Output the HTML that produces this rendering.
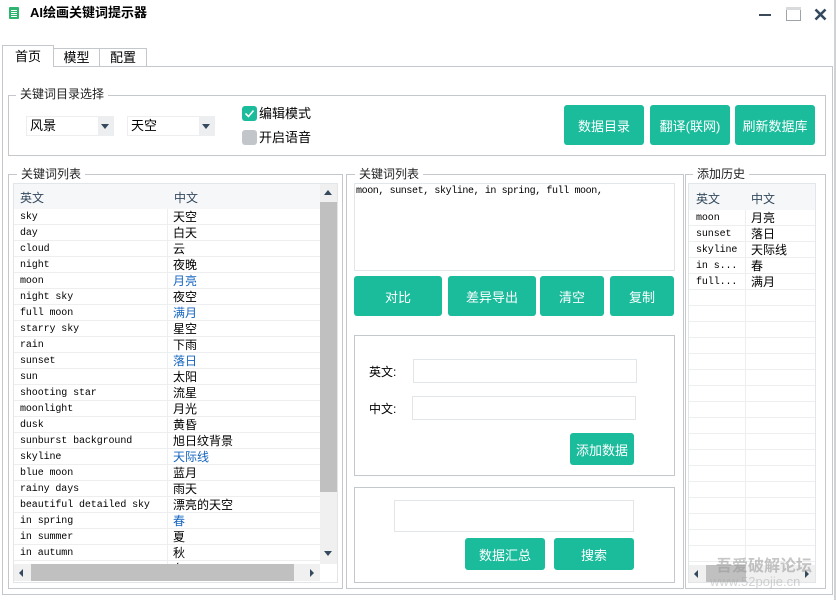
<!DOCTYPE html>
<html><head><meta charset="utf-8"><style>
*{margin:0;padding:0;box-sizing:border-box}
body{width:836px;height:600px;background:#fff;position:relative;overflow:hidden;font-family:"Liberation Sans","Noto Sans CJK SC",sans-serif;font-size:12px;color:#000}
.a{position:absolute}
.bx{position:absolute;border:1px solid #c4c8cc}
.lg{position:absolute;background:#fff;padding:0 4px;font-size:12px;line-height:14px;color:#222}
.btn{position:absolute;background:#1abc9c;color:#fff;border-radius:3px;font-size:13px;display:flex;align-items:center;justify-content:center}
.inp{position:absolute;border:1px solid #e3e6e8;background:#fff}
.grid .r{position:absolute;left:0;height:16px;border-bottom:1px solid #eceef0;width:100%}
.en{position:absolute;top:2px;font-family:"Liberation Mono",monospace;font-size:10px;line-height:14px;letter-spacing:-0.1px}
.zh{position:absolute;top:0;font-size:12px;line-height:16px}
.bl{color:#1565c0}
</style></head><body>
<!-- title bar -->
<div class="a" style="left:9px;top:7px;width:10px;height:12px;background:#2db56f;border-radius:1px"></div>
<div class="a" style="left:11px;top:10px;width:6px;height:1px;background:#fff;box-shadow:0 2px 0 #fff,0 4px 0 #fff,0 6px 0 #fff"></div>
<div class="a" style="left:30px;top:5px;font-weight:bold;font-size:13px;line-height:16px">AI绘画关键词提示器</div>
<div class="a" style="left:759px;top:14px;width:12px;height:2px;background:#3a4a5a"></div>
<div class="a" style="left:786px;top:7px;width:15px;height:14px;border:1px solid #a0a4a8"></div>
<div class="a" style="left:786px;top:7px;width:15px;height:3px;background:#d8dadc"></div>
<svg class="a" style="left:814px;top:8px" width="13" height="13"><path d="M1.5 1.5L11.5 11.5M11.5 1.5L1.5 11.5" stroke="#34495e" stroke-width="2.6"/></svg>
<div class="a" style="left:834px;top:0;width:2px;height:600px;background:#d0d3d6"></div>

<!-- tabs -->
<div class="a" style="left:2px;top:45px;width:52px;height:22px;border:1px solid #c4c8cc;border-bottom:none;background:#fff;z-index:2;text-align:center;line-height:22px;font-size:13px">首页</div>
<div class="a" style="left:53px;top:48px;width:47px;height:19px;border:1px solid #c4c8cc;text-align:center;line-height:18px;font-size:13px">模型</div>
<div class="a" style="left:99px;top:48px;width:48px;height:19px;border:1px solid #c4c8cc;text-align:center;line-height:18px;font-size:13px">配置</div>
<div class="bx" style="left:2px;top:66px;width:831px;height:529px"></div>

<!-- group 1 -->
<div class="bx" style="left:8px;top:95px;width:818px;height:61px"></div>
<div class="lg" style="left:16px;top:87px">关键词目录选择</div>
<div class="a" style="left:26px;top:116px;width:88px;height:20px;border:1px solid #eceef0"></div>
<div class="a" style="left:30px;top:118px;font-size:13px;line-height:16px">风景</div>
<div class="a" style="left:98px;top:117px;width:15px;height:18px;background:#eceef0"></div>
<div class="a" style="left:101px;top:124px;border-left:4px solid transparent;border-right:4px solid transparent;border-top:5px solid #34495e"></div>
<div class="a" style="left:127px;top:116px;width:88px;height:20px;border:1px solid #eceef0"></div>
<div class="a" style="left:131px;top:118px;font-size:13px;line-height:16px">天空</div>
<div class="a" style="left:199px;top:117px;width:15px;height:18px;background:#eceef0"></div>
<div class="a" style="left:202px;top:124px;border-left:4px solid transparent;border-right:4px solid transparent;border-top:5px solid #34495e"></div>
<div class="a" style="left:242px;top:106px;width:15px;height:15px;background:#1abc9c;border-radius:3px"></div>
<svg class="a" style="left:242px;top:106px" width="15" height="15"><path d="M3.5 7.5L6.5 10.5L11.5 4.5" stroke="#fff" stroke-width="1.6" fill="none"/></svg>
<div class="a" style="left:259px;top:105px;font-size:13px;line-height:17px">编辑模式</div>
<div class="a" style="left:242px;top:130px;width:15px;height:15px;background:#c2c6ca;border-radius:3px"></div>
<div class="a" style="left:259px;top:129px;font-size:13px;line-height:17px">开启语音</div>
<div class="btn" style="left:564px;top:105px;width:80px;height:40px">数据目录</div>
<div class="btn" style="left:650px;top:105px;width:80px;height:40px">翻译(联网)</div>
<div class="btn" style="left:735px;top:105px;width:80px;height:40px">刷新数据库</div>

<!-- left group -->
<div class="bx" style="left:8px;top:174px;width:335px;height:415px"></div>
<div class="lg" style="left:17px;top:167px">关键词列表</div>
<div class="a grid" style="left:13px;top:183px;width:325px;height:400px;border:1px solid #e3e6e8;overflow:hidden">
<div class="a" style="left:0;top:0;width:306px;height:25px;background:#f5f7f8"></div>
<div class="a" style="left:6px;top:5px;color:#34495e;font-size:12px">英文</div>
<div class="a" style="left:160px;top:5px;color:#34495e;font-size:12px">中文</div>
<div class="a" style="left:153px;top:25px;width:1px;height:355px;background:#eceef0"></div>
<div class="a" style="left:0;top:25px;width:306px">
<div class="r" style="top:0"><span class="en" style="left:6px">sky</span><span class="zh" style="left:159px">天空</span></div>
<div class="r" style="top:16px"><span class="en" style="left:6px">day</span><span class="zh" style="left:159px">白天</span></div>
<div class="r" style="top:32px"><span class="en" style="left:6px">cloud</span><span class="zh" style="left:159px">云</span></div>
<div class="r" style="top:48px"><span class="en" style="left:6px">night</span><span class="zh" style="left:159px">夜晚</span></div>
<div class="r" style="top:64px"><span class="en" style="left:6px">moon</span><span class="zh bl" style="left:159px">月亮</span></div>
<div class="r" style="top:80px"><span class="en" style="left:6px">night sky</span><span class="zh" style="left:159px">夜空</span></div>
<div class="r" style="top:96px"><span class="en" style="left:6px">full moon</span><span class="zh bl" style="left:159px">满月</span></div>
<div class="r" style="top:112px"><span class="en" style="left:6px">starry sky</span><span class="zh" style="left:159px">星空</span></div>
<div class="r" style="top:128px"><span class="en" style="left:6px">rain</span><span class="zh" style="left:159px">下雨</span></div>
<div class="r" style="top:144px"><span class="en" style="left:6px">sunset</span><span class="zh bl" style="left:159px">落日</span></div>
<div class="r" style="top:160px"><span class="en" style="left:6px">sun</span><span class="zh" style="left:159px">太阳</span></div>
<div class="r" style="top:176px"><span class="en" style="left:6px">shooting star</span><span class="zh" style="left:159px">流星</span></div>
<div class="r" style="top:192px"><span class="en" style="left:6px">moonlight</span><span class="zh" style="left:159px">月光</span></div>
<div class="r" style="top:208px"><span class="en" style="left:6px">dusk</span><span class="zh" style="left:159px">黄昏</span></div>
<div class="r" style="top:224px"><span class="en" style="left:6px">sunburst background</span><span class="zh" style="left:159px">旭日纹背景</span></div>
<div class="r" style="top:240px"><span class="en" style="left:6px">skyline</span><span class="zh bl" style="left:159px">天际线</span></div>
<div class="r" style="top:256px"><span class="en" style="left:6px">blue moon</span><span class="zh" style="left:159px">蓝月</span></div>
<div class="r" style="top:272px"><span class="en" style="left:6px">rainy days</span><span class="zh" style="left:159px">雨天</span></div>
<div class="r" style="top:288px"><span class="en" style="left:6px">beautiful detailed sky</span><span class="zh" style="left:159px">漂亮的天空</span></div>
<div class="r" style="top:304px"><span class="en" style="left:6px">in spring</span><span class="zh bl" style="left:159px">春</span></div>
<div class="r" style="top:320px"><span class="en" style="left:6px">in summer</span><span class="zh" style="left:159px">夏</span></div>
<div class="r" style="top:336px"><span class="en" style="left:6px">in autumn</span><span class="zh" style="left:159px">秋</span></div>
<div class="r" style="top:352px"><span class="en" style="left:6px"></span><span class="zh" style="left:159px">冬</span></div>
</div>
<div class="a" style="left:306px;top:0;width:17px;height:380px;background:#f0f0f0"></div>
<div class="a" style="left:306px;top:18px;width:17px;height:290px;background:#c0c0c0"></div>
<div class="a" style="left:310px;top:6px;border-left:4px solid transparent;border-right:4px solid transparent;border-bottom:5px solid #34495e"></div>
<div class="a" style="left:310px;top:367px;border-left:4px solid transparent;border-right:4px solid transparent;border-top:5px solid #34495e"></div>
<div class="a" style="left:0;top:380px;width:306px;height:17px;background:#f0f0f0"></div>
<div class="a" style="left:17px;top:380px;width:263px;height:17px;background:#c0c0c0"></div>
<div class="a" style="left:5px;top:385px;border-top:4px solid transparent;border-bottom:4px solid transparent;border-right:4px solid #34495e"></div>
<div class="a" style="left:296px;top:385px;border-top:4px solid transparent;border-bottom:4px solid transparent;border-left:4px solid #34495e"></div>
</div>

<!-- middle group -->
<div class="bx" style="left:346px;top:174px;width:338px;height:415px"></div>
<div class="lg" style="left:355px;top:167px">关键词列表</div>
<div class="inp" style="left:354px;top:183px;width:321px;height:88px"></div>
<div class="a" style="left:356px;top:185px;font-family:'Liberation Mono',monospace;font-size:10px;letter-spacing:-0.4px;line-height:14px">moon, sunset, skyline, in spring, full moon,</div>
<div class="btn" style="left:354px;top:276px;width:88px;height:40px">对比</div>
<div class="btn" style="left:448px;top:276px;width:88px;height:40px">差异导出</div>
<div class="btn" style="left:540px;top:276px;width:64px;height:40px">清空</div>
<div class="btn" style="left:610px;top:276px;width:64px;height:40px">复制</div>
<div class="bx" style="left:354px;top:335px;width:321px;height:141px"></div>
<div class="a" style="left:369px;top:363px;font-size:12px">英文:</div>
<div class="inp" style="left:413px;top:359px;width:224px;height:24px"></div>
<div class="a" style="left:369px;top:400px;font-size:12px">中文:</div>
<div class="inp" style="left:412px;top:396px;width:224px;height:24px"></div>
<div class="btn" style="left:570px;top:433px;width:64px;height:32px">添加数据</div>
<div class="bx" style="left:354px;top:487px;width:321px;height:96px"></div>
<div class="inp" style="left:394px;top:500px;width:240px;height:32px"></div>
<div class="btn" style="left:465px;top:538px;width:80px;height:32px">数据汇总</div>
<div class="btn" style="left:554px;top:538px;width:80px;height:32px">搜索</div>

<!-- right group -->
<div class="bx" style="left:685px;top:174px;width:141px;height:415px"></div>
<div class="lg" style="left:693px;top:167px">添加历史</div>
<div class="a grid" style="left:688px;top:183px;width:128px;height:400px;border:1px solid #e3e6e8;overflow:hidden">
<div class="a" style="left:0;top:0;width:126px;height:26px;background:#f5f7f8"></div>
<div class="a" style="left:7px;top:6px;color:#34495e">英文</div>
<div class="a" style="left:62px;top:6px;color:#34495e">中文</div>
<div class="a" style="left:56px;top:26px;width:1px;height:355px;background:#eceef0"></div>
<div class="a" style="left:0;top:26px;width:126px">
<div class="r" style="top:0"><span class="en" style="left:7px">moon</span><span class="zh" style="left:62px">月亮</span></div>
<div class="r" style="top:16px"><span class="en" style="left:7px">sunset</span><span class="zh" style="left:62px">落日</span></div>
<div class="r" style="top:32px"><span class="en" style="left:7px">skyline</span><span class="zh" style="left:62px">天际线</span></div>
<div class="r" style="top:48px"><span class="en" style="left:7px">in s...</span><span class="zh" style="left:62px">春</span></div>
<div class="r" style="top:64px"><span class="en" style="left:7px">full...</span><span class="zh" style="left:62px">满月</span></div>
<div class="r" style="top:80px"></div><div class="r" style="top:96px"></div><div class="r" style="top:112px"></div>
<div class="r" style="top:128px"></div><div class="r" style="top:144px"></div><div class="r" style="top:160px"></div>
<div class="r" style="top:176px"></div><div class="r" style="top:192px"></div><div class="r" style="top:208px"></div>
<div class="r" style="top:224px"></div><div class="r" style="top:240px"></div><div class="r" style="top:256px"></div>
<div class="r" style="top:272px"></div><div class="r" style="top:288px"></div><div class="r" style="top:304px"></div>
<div class="r" style="top:320px"></div><div class="r" style="top:336px"></div>
</div>
<div class="a" style="left:0;top:381px;width:126px;height:17px;background:#f0f0f0"></div>
<div class="a" style="left:17px;top:381px;width:40px;height:17px;background:#c0c0c0"></div>
<div class="a" style="left:5px;top:386px;border-top:4px solid transparent;border-bottom:4px solid transparent;border-right:4px solid #34495e"></div>
<div class="a" style="left:116px;top:386px;border-top:4px solid transparent;border-bottom:4px solid transparent;border-left:4px solid #34495e"></div>
</div>
<div class="a" style="left:716px;top:552px;font-size:16px;color:rgba(150,150,150,0.55);font-weight:bold">吾爱破解论坛</div>
<div class="a" style="left:710px;top:574px;font-size:13px;color:rgba(170,170,170,0.5)">www.52pojie.cn</div>
</body></html>
